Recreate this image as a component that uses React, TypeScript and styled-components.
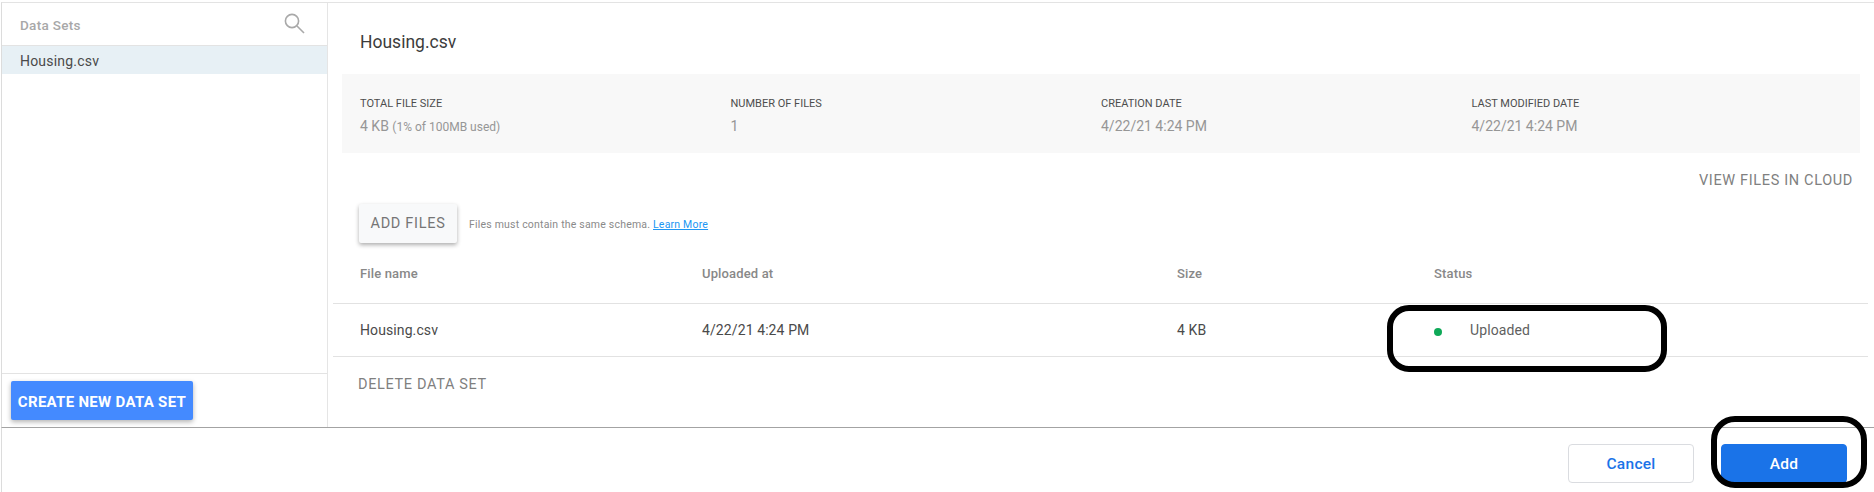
import React from "react";
import styled, { createGlobalStyle } from "styled-components";

const Global = createGlobalStyle`
  html, body { margin: 0; padding: 0; background: #fff; }
  body { font-family: Roboto, "Liberation Sans", sans-serif; }
  * { box-sizing: border-box; }
`;

const Page = styled.div`
  position: relative;
  width: 1874px;
  height: 492px;
  overflow: hidden;
  padding-top: 2px;
  display: flex;
  flex-direction: column;
  background: #fff;
`;

const Workspace = styled.div`
  height: 426px;
  display: flex;
  margin-left: 1px;
  border-top: 1px solid #e3e3e3;
  border-left: 1px solid #dcdcdc;
  border-bottom: 1px solid #a3a3a3;
`;

const Sidebar = styled.aside`
  width: 326px;
  flex: none;
  display: flex;
  flex-direction: column;
  border-right: 1px solid #e5e5e5;
`;

const SidebarHeader = styled.div`
  height: 43px;
  flex: none;
  display: flex;
  align-items: center;
  justify-content: space-between;
  padding: 1px 22px 0 18px;
  border-bottom: 1px solid #e3e3e3;
  font-size: 13.5px;
  font-weight: 500;
  letter-spacing: 0.3px;
  color: #a8a8a8;
`;

const SearchIcon = styled.svg`
  width: 21px;
  height: 21px;
  margin-top: -3px;
  fill: none;
  stroke: #a9a9a9;
  stroke-width: 1.6;
`;

const DataSetRow = styled.div`
  height: 28px;
  flex: none;
  display: flex;
  align-items: center;
  padding: 2px 18px 0;
  background: #e7f0f5;
  font-size: 14px;
  letter-spacing: 0.2px;
  color: #4a4a4a;
`;

const SidebarFooter = styled.div`
  margin-top: auto;
  height: 54px;
  flex: none;
  padding: 7px 9px;
  border-top: 1px solid #e3e3e3;
`;

const PrimaryWide = styled.button`
  width: 182px;
  height: 39px;
  padding: 2px 0 0;
  border: 0;
  border-radius: 2px;
  background: #448aff;
  color: #fff;
  font: 700 15px Roboto, sans-serif;
  letter-spacing: 0.3px;
  white-space: nowrap;
  box-shadow: 0 2px 5px rgba(0, 0, 0, 0.3);
`;

const Main = styled.main`
  flex: 1;
  min-width: 0;
  display: flex;
  flex-direction: column;
  padding: 0 6px 0 5px;
`;

const Title = styled.h2`
  margin: 0;
  height: 71px;
  padding: 26px 0 0 27px;
  font-size: 17.5px;
  line-height: 26px;
  font-weight: 400;
  color: #3c3c3c;
`;

const Stats = styled.section`
  width: 1518px;
  margin-left: 9px;
  height: 79px;
  padding: 22px 0 0 18px;
  display: grid;
  grid-template-columns: repeat(4, 370.5px);
  background: #f8f8f8;
`;

const Stat = styled.div`
  display: flex;
  flex-direction: column;
  gap: 7px;
`;

const StatLabel = styled.div`
  font-size: 11px;
  line-height: 16px;
  color: #4d4d4d;
`;

const StatValue = styled.div`
  font-size: 14px;
  line-height: 15px;
  color: #969696;
`;

const StatNote = styled.span`
  font-size: 12px;
`;

const ViewFilesRow = styled.div`
  height: 51px;
  display: flex;
  align-items: center;
  justify-content: flex-end;
  padding: 3px 15px 0 0;
`;

const TextAction = styled.span`
  font-size: 14.5px;
  letter-spacing: 0.65px;
  color: #808080;
`;

const UploadRow = styled.div`
  height: 39px;
  display: flex;
  align-items: center;
  gap: 12px;
  margin-left: 26px;
`;

const SecondaryButton = styled.button`
  width: 98px;
  height: 39px;
  padding: 0;
  border: 0;
  border-radius: 2px;
  background: #f8f9fa;
  color: #757575;
  font: 400 14.5px Roboto, sans-serif;
  letter-spacing: 0.7px;
  box-shadow: 0 2px 4px rgba(0, 0, 0, 0.32);
`;

const Hint = styled.span`
  font-size: 10.5px;
  letter-spacing: 0.2px;
  color: #8a8a8a;
  padding-top: 1px;
`;

const HintLink = styled.a`
  color: #2196f3;
  text-decoration: underline;
`;

const TableRow = styled.div<{ $height: number }>`
  height: ${(p) => p.$height}px;
  display: grid;
  grid-template-columns: 342px 475px 257px 1fr;
  align-items: center;
  padding-left: 27px;
  width: 1535px;
  border-bottom: 1px solid #e2e2e2;
`;

const HeadCell = styled.div`
  font-size: 13px;
  font-weight: 500;
  letter-spacing: 0.15px;
  color: #888;
`;

const Cell = styled.div`
  font-size: 14px;
  letter-spacing: 0.1px;
  color: #4a4a4a;
`;

const StatusCell = styled(Cell)`
  display: flex;
  align-items: center;
  color: #5f5f5f;
`;

const StatusDot = styled.span`
  width: 8px;
  height: 8px;
  flex: none;
  margin: 4px 28px 0 0;
  border-radius: 50%;
  background: #0fa958;
`;

const DeleteRow = styled.div`
  padding: 17px 0 0 25px;
  line-height: 20px;
`;

const Footer = styled.footer`
  flex: 1;
  display: flex;
  align-items: flex-start;
  justify-content: flex-end;
  gap: 27px;
  padding: 16px 27px 0 0;
  margin-left: 1px;
  border-left: 1px solid #dcdcdc;
`;

const DialogButton = styled.button<{ $primary?: boolean }>`
  width: 126px;
  height: 39px;
  padding: 0;
  border-radius: 4px;
  border: 1px solid ${(p) => (p.$primary ? "#1a73e8" : "#dadce0")};
  background: ${(p) => (p.$primary ? "#1a73e8" : "#fff")};
  color: ${(p) => (p.$primary ? "#fff" : "#1a73e8")};
  font: 500 15.5px Roboto, sans-serif;
  letter-spacing: 0.3px;
`;

const Annotation = styled.div<{ $x: number; $y: number; $w: number; $h: number; $r: number }>`
  position: absolute;
  left: ${(p) => p.$x}px;
  top: ${(p) => p.$y}px;
  width: ${(p) => p.$w}px;
  height: ${(p) => p.$h}px;
  border: 6px solid #000;
  border-radius: ${(p) => p.$r}px;
  pointer-events: none;
`;

export default function App() {
  return (
    <Page>
      <Global />
      <Workspace>
        <Sidebar>
          <SidebarHeader>
            Data Sets
            <SearchIcon viewBox="0 0 21 21">
              <circle cx="8" cy="8" r="6.6" />
              <path d="M13 13l7 7" />
            </SearchIcon>
          </SidebarHeader>
          <DataSetRow>Housing.csv</DataSetRow>
          <SidebarFooter>
            <PrimaryWide>CREATE NEW DATA SET</PrimaryWide>
          </SidebarFooter>
        </Sidebar>
        <Main>
          <Title>Housing.csv</Title>
          <Stats>
            <Stat>
              <StatLabel>TOTAL FILE SIZE</StatLabel>
              <StatValue>
                4 KB <StatNote>(1% of 100MB used)</StatNote>
              </StatValue>
            </Stat>
            <Stat>
              <StatLabel>NUMBER OF FILES</StatLabel>
              <StatValue>1</StatValue>
            </Stat>
            <Stat>
              <StatLabel>CREATION DATE</StatLabel>
              <StatValue>4/22/21 4:24 PM</StatValue>
            </Stat>
            <Stat>
              <StatLabel>LAST MODIFIED DATE</StatLabel>
              <StatValue>4/22/21 4:24 PM</StatValue>
            </Stat>
          </Stats>
          <ViewFilesRow>
            <TextAction>VIEW FILES IN CLOUD</TextAction>
          </ViewFilesRow>
          <UploadRow>
            <SecondaryButton>ADD FILES</SecondaryButton>
            <Hint>
              Files must contain the same schema. <HintLink>Learn More</HintLink>
            </Hint>
          </UploadRow>
          <TableRow $height={61}>
            <HeadCell>File name</HeadCell>
            <HeadCell>Uploaded at</HeadCell>
            <HeadCell>Size</HeadCell>
            <HeadCell>Status</HeadCell>
          </TableRow>
          <TableRow $height={53}>
            <Cell>Housing.csv</Cell>
            <Cell>4/22/21 4:24 PM</Cell>
            <Cell>4 KB</Cell>
            <StatusCell>
              <StatusDot />
              Uploaded
            </StatusCell>
          </TableRow>
          <DeleteRow>
            <TextAction>DELETE DATA SET</TextAction>
          </DeleteRow>
        </Main>
      </Workspace>
      <Footer>
        <DialogButton>Cancel</DialogButton>
        <DialogButton $primary>Add</DialogButton>
      </Footer>
      <Annotation $x={1387} $y={305} $w={280} $h={67} $r={22} />
      <Annotation $x={1711} $y={416} $w={156} $h={72} $r={24} />
    </Page>
  );
}
